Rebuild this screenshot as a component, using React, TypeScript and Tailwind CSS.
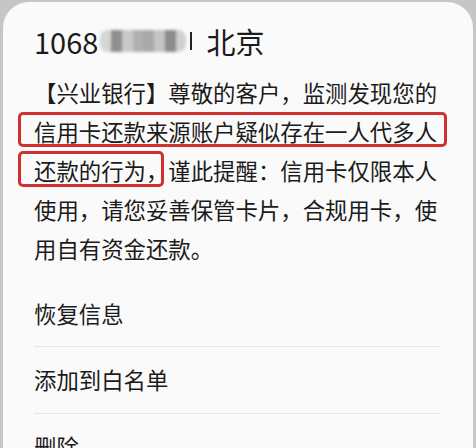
import React from "react";

const font = { fontFamily: '"Noto Sans CJK SC", "Noto Sans", sans-serif' };

function Mosaic() {
  const shades = ["#d6d6d6", "#8f8f8f", "#c9c9c9", "#b0b0b0", "#a9a9a9", "#c4c4c4", "#8c8c8c", "#d0d0d0"];
  return (
    <span className="inline-flex h-[22px] w-[86px] overflow-hidden rounded-[8px] blur-[1.5px] mx-[2px]">
      {shades.map((c, i) => (
        <span key={i} className="h-full flex-1" style={{ background: c }} />
      ))}
    </span>
  );
}

export default function App() {
  return (
    <div className="h-[448px] w-[476px] overflow-hidden bg-[#c6c6c6] px-[3px] pt-[2px]" style={font}>
      <div className="h-full rounded-t-[26px] bg-[#fafafa] pl-[31px] pr-[30px] text-[#1b1b1b]">
        <div className="flex items-center pt-[18px] h-[60px] text-[29px] leading-[40px]">
          <span>1068</span>
          <Mosaic />
          <span className="ml-[2px] h-[18px] w-[2px] bg-[#222]" />
          <span className="ml-[14px]">北京</span>
        </div>
        <div className="mt-[11px] text-[22.4px] leading-[39px] whitespace-nowrap">
          <div>【兴业银行】尊敬的客户，监测发现您的</div>
          <div className="relative">
            <span className="absolute left-[-16px] top-0 h-[35px] w-[429px] rounded-[5px] border-[3px] border-[#d0302f]" />
            信用卡还款来源账户疑似存在一人代多人
          </div>
          <div className="relative">
            <span className="absolute left-[-16px] top-0 h-[36px] w-[146px] rounded-[5px] border-[3px] border-[#d0302f]" />
            还款的行为，谨此提醒：信用卡仅限本人
          </div>
          <div>使用，请您妥善保管卡片，合规用卡，使</div>
          <div>用自有资金还款。</div>
        </div>
        <div className="mt-[13px] text-[22.4px] mr-[2px]">
          <div className="flex h-[66px] items-center border-b border-[#e4e4e4]">恢复信息</div>
          <div className="flex h-[67px] items-center border-b border-[#e4e4e4]">添加到白名单</div>
          <div className="flex h-[66px] items-center">删除</div>
        </div>
      </div>
    </div>
  );
}
